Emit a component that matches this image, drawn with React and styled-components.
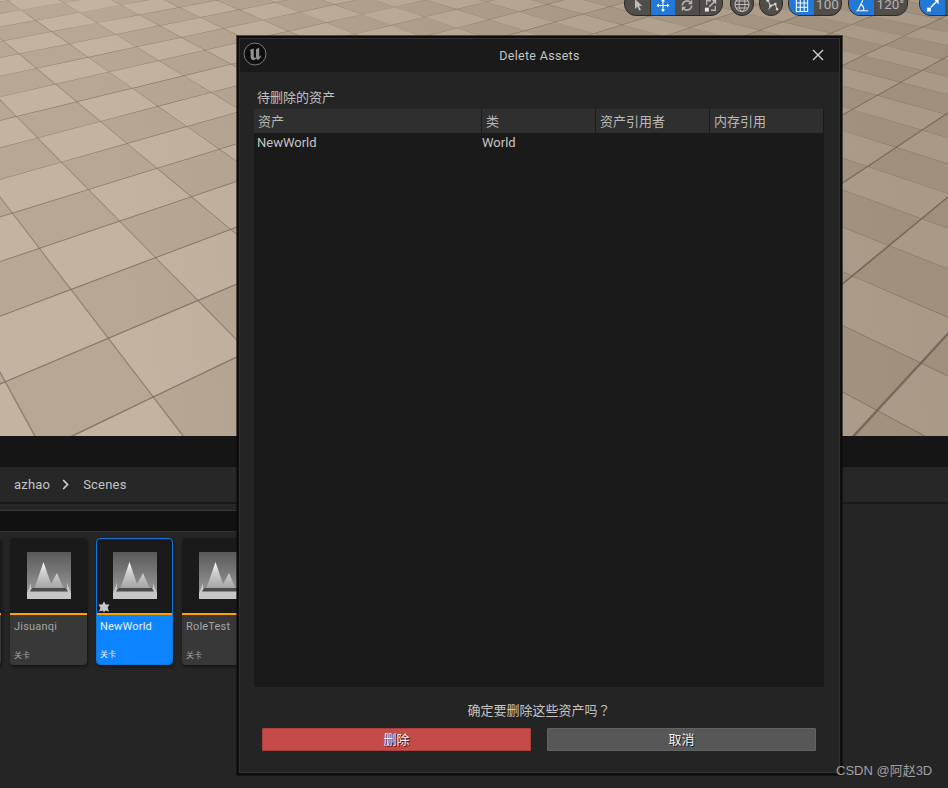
import React from "react";
import styled, { createGlobalStyle } from "styled-components";

const GlobalStyle = createGlobalStyle`
  html, body { margin: 0; padding: 0; background: #252525; }
  body { font-family: Roboto, "Noto Sans CJK SC", sans-serif; }
`;

const Page = styled.div`
  position: relative;
  width: 948px;
  height: 788px;
  overflow: hidden;
  display: flex;
  flex-direction: column;
  background: #252525;
`;

/* ---------- viewport ---------- */
const Viewport = styled.div`
  position: relative;
  height: 436px;
  flex: none;
  overflow: hidden;
  background: #b8a994;
`;
const FloorSvg = styled.svg`
  display: block;
`;
const Toolbar = styled.div`
  position: absolute;
  top: 0;
  left: 624px;
  display: flex;
  align-items: flex-start;
`;
const Pill = styled.div`
  flex: none;
  display: flex;
  width: ${(p) => p.$w}px;
  height: 26px;
  margin-top: -10px;
  margin-left: ${(p) => p.$gap || 0}px;
  box-sizing: border-box;
  border: 1px solid #2c2a28;
  border-radius: 12px;
  overflow: hidden;
  background: #514d49;
`;
const Segment = styled.div`
  flex: ${(p) => (p.$w ? `0 0 ${p.$w}px` : "1")};
  display: flex;
  align-items: flex-end;
  justify-content: center;
  padding-bottom: 3px;
  box-sizing: border-box;
  background: ${(p) => (p.$active ? "#2178d6" : "transparent")};
  border-right: ${(p) => (p.$divide ? "1px solid #35322f" : "none")};
  color: #b5b3b0;
  font-size: 13.5px;
  line-height: 15px;
`;

/* ---------- content browser ---------- */
const Band = styled.div`
  height: 31px;
  flex: none;
  background: #151515;
`;
const PathBar = styled.div`
  height: 35px;
  flex: none;
  display: flex;
  align-items: center;
  padding-left: 14px;
  background: #272727;
  color: #c4c4c4;
  font-size: 13px;
  letter-spacing: 0.2px;
`;
const Chevron = styled.svg`
  margin: 0 14px 0 12px;
`;
const Rule = styled.div`
  height: 2px;
  flex: none;
  background: #1a1a1a;
`;
const FilterGap = styled.div`
  width: 400px;
  height: 7px;
  flex: none;
  box-sizing: border-box;
  background: #262626;
  border-bottom: 1px solid #383838;
`;
const FilterStrip = styled.div`
  width: 400px;
  height: 20px;
  flex: none;
  background: #111111;
  border-bottom: 1px solid #333333;
`;
const AssetRow = styled.div`
  flex: 1;
  display: flex;
  gap: 9px;
  padding-top: 6px;
  margin-left: -76px;
`;
const Card = styled.div`
  position: relative;
  flex: none;
  width: 77px;
  height: 127px;
  box-sizing: border-box;
  display: flex;
  flex-direction: column;
  border-radius: 4px;
  overflow: hidden;
  background: #1a1a1a;
  box-shadow: 1px 2px 3px rgba(0, 0, 0, 0.45);
  border: ${(p) => (p.$selected ? "1px solid #0f78dc" : "none")};
`;
const Thumb = styled.div`
  flex: 1;
  display: flex;
  justify-content: center;
  padding-top: ${(p) => (p.$selected ? 13 : 14)}px;
`;
const TypeBar = styled.div`
  height: 2px;
  flex: none;
  background: #ffa200;
`;
const CardBody = styled.div`
  height: ${(p) => (p.$selected ? 49 : 50)}px;
  flex: none;
  display: flex;
  flex-direction: column;
  justify-content: space-between;
  box-sizing: border-box;
  padding: 5px 4px 3px ${(p) => (p.$selected ? 3 : 4)}px;
  background: ${(p) => (p.$selected ? "#0c84ff" : "#383838")};
  color: ${(p) => (p.$selected ? "#e8f2ff" : "#a4a4a4")};
`;
const CardName = styled.div`
  font-size: 11px;
  line-height: 14px;
  letter-spacing: 0.2px;
`;
const CardType = styled.div`
  font-size: 8px;
  line-height: 12px;
`;
const Star = styled.svg`
  position: absolute;
  left: 1px;
  top: 62px;
`;

/* ---------- dialog ---------- */
const Dialog = styled.div`
  position: absolute;
  left: 237px;
  top: 36px;
  width: 605px;
  height: 739px;
  box-sizing: border-box;
  border: 1px solid #0c0c0c;
  outline: 1px solid rgba(12, 12, 12, 0.6);
  background: #0f0f0f;
  padding: 1px;
`;
const DialogFrame = styled.div`
  height: 100%;
  box-sizing: border-box;
  display: flex;
  flex-direction: column;
  border: 1px solid #303030;
  background: #242424;
`;
const TitleBar = styled.div`
  position: relative;
  height: 33px;
  flex: none;
  display: flex;
  align-items: center;
  justify-content: center;
  background: #1a1a1a;
  color: #c4c4c4;
  font-size: 12.5px;
  letter-spacing: 0.3px;
`;
const Logo = styled.svg`
  position: absolute;
  left: 3px;
  top: 3px;
`;
const CloseIcon = styled.svg`
  position: absolute;
  right: 14px;
  top: 9px;
`;
const DialogBody = styled.div`
  flex: 1;
  display: flex;
  flex-direction: column;
  padding: 0 15px 0 14px;
`;
const SectionLabel = styled.div`
  height: 37px;
  flex: none;
  box-sizing: border-box;
  padding: 17px 0 0 3px;
  color: #c0c0c0;
  font-size: 13px;
  line-height: 18px;
`;
const Table = styled.div`
  flex: 1;
  display: flex;
  flex-direction: column;
  background: #1a1a1a;
  color: #c4c4c4;
  font-size: 13px;
`;
const HeaderRow = styled.div`
  height: 24px;
  flex: none;
  display: grid;
  grid-template-columns: 228px 114px 114px 1fr;
  margin-right: 1px;
  background: #2f2f2f;
`;
const HeaderCell = styled.div`
  display: flex;
  align-items: center;
  padding: 0 0 2px 4px;
  box-sizing: border-box;
  border-right: ${(p) => (p.$last ? "none" : "1px solid #1c1c1c")};
  color: #b8b8b8;
`;
const DataRow = styled.div`
  height: 19px;
  flex: none;
  display: grid;
  grid-template-columns: 228px 1fr;
  align-items: center;
`;
const DataCell = styled.div`
  padding-left: 3px;
  &:nth-child(2) { padding-left: 0; }
`;
const Footer = styled.div`
  height: 85px;
  flex: none;
  display: flex;
  flex-direction: column;
  align-items: center;
  color: #c4c4c4;
  font-size: 13px;
`;
const Question = styled.div`
  height: 41px;
  flex: none;
  box-sizing: border-box;
  padding-top: 14px;
  line-height: 18px;
`;
const QuestionMark = styled.span`
  font-family: "Noto Sans CJK TC", sans-serif;
`;
const ButtonRow = styled.div`
  align-self: stretch;
  display: grid;
  grid-template-columns: 269px 269px;
  gap: 16px;
  padding-left: 8px;
`;
const ActionButton = styled.button`
  height: 23px;
  padding: 0;
  box-sizing: border-box;
  border-radius: 1px;
  border: 1px solid ${(p) => (p.$danger ? "#ab3f3d" : "#636363")};
  background: ${(p) => (p.$danger ? "#c54b49" : "#575757")};
  color: #f2f2f2;
  font-family: inherit;
  font-size: 13px;
  line-height: 20px;
  text-shadow: 1px 1px 0 rgba(0, 0, 0, 0.7);
`;
const Watermark = styled.div`
  position: absolute;
  left: 836px;
  top: 762px;
  color: #a0a0a0;
  font-family: "Liberation Sans", "Noto Sans CJK SC", sans-serif;
  font-size: 13px;
  line-height: 18px;
  white-space: nowrap;
`;

/* ---------- floor drawing: a tile grid under a two-point perspective ---------- */
const ALPHA = 0.0772;
const BETA = 0.1017;
const project = (u, v) => {
  const a = ALPHA * u;
  const b = BETA * v;
  const s = 1 + a + b;
  return [(1476 * a - 334 * b + 153.3) / s, (-239 * (a + b) + 397) / s, s];
};
const quad = (u0, v0, u1, v1) => {
  const pts = [project(u0, v0), project(u1, v0), project(u1, v1), project(u0, v1)];
  if (pts.some((p) => p[2] < 0.15)) return null;
  const xs = pts.map((p) => p[0]);
  const ys = pts.map((p) => p[1]);
  if (Math.max(...xs) < -5 || Math.min(...xs) > 953 || Math.max(...ys) < -5 || Math.min(...ys) > 441) return null;
  return pts.map((p) => `${p[0].toFixed(1)},${p[1].toFixed(1)}`).join(" ");
};
const buildFloor = () => {
  const light = [];
  const dark = [];
  const groutU = [];
  const groutV = [];
  for (let i = -40; i < 70; i++) {
    for (let j = -70; j < 40; j++) {
      const t = quad(i, j, i + 1, j + 1);
      if (!t) continue;
      ((i + j) % 2 === 0 ? light : dark).push(t);
      const e1 = quad(i - 0.006, j, i + 0.006, j + 1);
      const e2 = quad(i, j - 0.009, i + 1, j + 0.009);
      if (e1) groutU.push(e1);
      if (e2) groutV.push(e2);
    }
  }
  return { light, dark, groutU, groutV };
};
const floor = buildFloor();

const Floor = () => (
  <FloorSvg width="948" height="436" viewBox="0 0 948 436">
    <defs>
      <linearGradient id="shade" gradientUnits="userSpaceOnUse" x1="120" y1="300" x2="900" y2="200">
        <stop offset="0" stopColor="#2a1a08" stopOpacity="0" />
        <stop offset="1" stopColor="#2a1a08" stopOpacity="0.17" />
      </linearGradient>
    </defs>
    {floor.light.map((p, i) => <polygon key={`l${i}`} points={p} fill="#c3b4a1" stroke="#c3b4a1" strokeWidth="0.5" />)}
    {floor.dark.map((p, i) => <polygon key={`d${i}`} points={p} fill="#b8a893" stroke="#b8a893" strokeWidth="0.5" />)}
    {floor.groutU.map((p, i) => <polygon key={`u${i}`} points={p} fill="#6f675c" fillOpacity="0.6" />)}
    {floor.groutV.map((p, i) => <polygon key={`v${i}`} points={p} fill="#6f675c" fillOpacity="0.75" />)}
    <rect width="948" height="436" fill="url(#shade)" />
  </FloorSvg>
);

/* ---------- icons ---------- */
const Ico = ({ children, w = 14, h = 13 }) => (
  <svg width={w} height={h} viewBox="0 0 16 15" fill="none" stroke="currentColor">
    {children}
  </svg>
);
const SelectIcon = () => (
  <Ico><path d="M4.5 0 L4.5 11.5 L7.3 8.8 L9.6 13.5 L11.4 12.6 L9.2 8 L13 8 Z" fill="#bdbab7" stroke="none" /></Ico>
);
const MoveIcon = () => (
  <Ico>
    <path d="M8 1.5V13.5M2 7.5H14" stroke="#fff" strokeWidth="1.3" />
    <path d="M8 0 L5.6 2.8H10.4Z M8 15 L5.6 12.2H10.4Z M0.5 7.5 L3.3 5.1V9.9Z M15.5 7.5 L12.7 5.1V9.9Z" fill="#fff" stroke="none" />
  </Ico>
);
const RotateIcon = () => (
  <Ico>
    <path d="M2.6 7.5A5.4 5.4 0 0 1 12 4M13.4 7.5A5.4 5.4 0 0 1 4 11" stroke="#b5b2af" strokeWidth="1.8" />
    <path d="M14 0.5V6H9Z M2 14.5V9H7Z" fill="#b5b2af" stroke="none" />
  </Ico>
);
const ScaleIcon = () => (
  <Ico>
    <path d="M3 7V2H8M13 8V13H8" stroke="#b5b2af" strokeWidth="1.5" />
    <path d="M6 9L13 2" stroke="#c2bfbc" strokeWidth="1.6" />
    <path d="M14 1v5l-5-5z" fill="#c2bfbc" stroke="none" />
    <rect x="1" y="10" width="4.5" height="4.5" fill="#e8e6e4" stroke="none" />
  </Ico>
);
const GlobeIcon = () => (
  <Ico w={16} h={15}>
    <circle cx="8" cy="7.5" r="7" stroke="#bdbab7" strokeWidth="1.1" />
    <ellipse cx="8" cy="7.5" rx="3" ry="7" stroke="#bdbab7" strokeWidth="1" />
    <path d="M1 7.5H15M2 4H14M2 11H14" stroke="#bdbab7" strokeWidth="1" />
  </Ico>
);
const SnapIcon = () => (
  <Ico w={15} h={14}>
    <path d="M4 2L7 8.5L12 6.5L14 12M7 8.5L5 12" stroke="#bdbab7" strokeWidth="1.3" />
    <circle cx="4" cy="2.5" r="1.7" fill="#d8d6d4" stroke="none" />
    <circle cx="7" cy="8.5" r="1.5" fill="#d8d6d4" stroke="none" />
    <circle cx="12" cy="6.5" r="1.5" fill="#d8d6d4" stroke="none" />
    <circle cx="14" cy="12" r="1.3" fill="#d8d6d4" stroke="none" />
  </Ico>
);
const GridIcon = () => (
  <Ico>
    <path d="M1.5 0V14.5H14.5V0M1.5 4.5H14.5M1.5 9.5H14.5M6 0V14.5M10.5 0V14.5" stroke="#fff" strokeWidth="1.2" />
  </Ico>
);
const AngleIcon = () => (
  <Ico>
    <path d="M1.5 13.5H15M3 13.5L9 1.5M7.3 6.3A7 7 0 0 1 9.8 13.5" stroke="#fff" strokeWidth="1.3" />
  </Ico>
);
const SurfaceScaleIcon = () => (
  <Ico>
    <path d="M5.5 9.5L13 2" stroke="#fff" strokeWidth="1.8" />
    <path d="M14.5 0.5v5.5l-5.5-5.5z" fill="#fff" stroke="none" />
    <rect x="1" y="10" width="4.5" height="4.5" fill="#fff" stroke="none" />
  </Ico>
);
const LevelIcon = () => (
  <svg width="44" height="47" viewBox="0 0 44 47">
    <defs>
      <linearGradient id="sky" x1="0" y1="0" x2="0" y2="1">
        <stop offset="0" stopColor="#595959" />
        <stop offset="1" stopColor="#a2a2a2" />
      </linearGradient>
      <linearGradient id="peak" x1="0" y1="0" x2="0" y2="1">
        <stop offset="0" stopColor="#ffffff" />
        <stop offset="0.4" stopColor="#cfcfcf" />
        <stop offset="1" stopColor="#a5a5a5" />
      </linearGradient>
    </defs>
    <rect width="44" height="47" fill="url(#sky)" />
    <path d="M0 47V41L4 31V36H40V31L44 41V47Z" fill="#c6c6c6" />
    <path d="M3 39.5L5 36H39L41 39.5Z" fill="#4b4b4b" />
    <path d="M7.5 36L16.5 10L24 32L30 21L36.5 36Z" fill="url(#peak)" />
  </svg>
);
const AssetCard = ({ name, selected }) => (
  <Card $selected={selected}>
    <Thumb $selected={selected}><LevelIcon /></Thumb>
    <TypeBar />
    <CardBody $selected={selected}>
      {name && <CardName>{name}</CardName>}
      {name && <CardType>关卡</CardType>}
    </CardBody>
    {selected && (
      <Star width="12" height="12" viewBox="0 0 12 12">
        <path d="M6 0.5L7.8 3.6L11.5 3.4L9.6 6.8L11 10.6L7.2 9.6L6 11.5L4.8 9.6L1 10.6L2.4 6.8L0.5 3.4L4.2 3.6Z" fill="#c8c8c8" />
      </Star>
    )}
  </Card>
);

export default function App() {
  return (
    <Page>
      <GlobalStyle />
      <Viewport>
        <Floor />
        <Toolbar>
          <Pill $w={99}>
            <Segment $w={26} $divide><SelectIcon /></Segment>
            <Segment $w={24} $active><MoveIcon /></Segment>
            <Segment $w={25} $divide><RotateIcon /></Segment>
            <Segment><ScaleIcon /></Segment>
          </Pill>
          <Pill $w={24} $gap={7}><Segment><GlobeIcon /></Segment></Pill>
          <Pill $w={24} $gap={5}><Segment><SnapIcon /></Segment></Pill>
          <Pill $w={54} $gap={5}>
            <Segment $w={25} $active><GridIcon /></Segment>
            <Segment>100</Segment>
          </Pill>
          <Pill $w={60} $gap={6}>
            <Segment $w={25} $active><AngleIcon /></Segment>
            <Segment>120°</Segment>
          </Pill>
          <Pill $w={50} $gap={11}>
            <Segment $w={25} $active><SurfaceScaleIcon /></Segment>
            <Segment />
          </Pill>
        </Toolbar>
      </Viewport>
      <Band />
      <PathBar>
        azhao
        <Chevron width="7" height="11" viewBox="0 0 7 11" fill="none">
          <path d="M1.2 1L5.5 5.5L1.2 10" stroke="#cfcfcf" strokeWidth="1.7" />
        </Chevron>
        Scenes
      </PathBar>
      <Rule />
      <FilterGap />
      <FilterStrip />
      <AssetRow>
        <AssetCard name="" />
        <AssetCard name="Jisuanqi" />
        <AssetCard name="NewWorld" selected />
        <AssetCard name="RoleTest" />
      </AssetRow>
      <Dialog>
        <DialogFrame>
          <TitleBar>
            <Logo width="24" height="24" viewBox="0 0 24 24" fill="none">
              <circle cx="12" cy="12" r="11" fill="#141414" stroke="#777" strokeWidth="1" />
              <circle cx="12" cy="12" r="9.2" fill="#0c0c0c" />
              <path d="M6.5 8.5C8 7.2 9.8 6.6 10.8 6.5V14.8C10.8 16 12 16 13 15.2V7.3L16.2 5.6V14.8L17.8 13.3V15.3L15 18.2L13.2 16.6L11.2 18.2C8.8 18.2 7.6 17 7.6 15V9.2Z" fill="#8f8f8f" />
            </Logo>
            Delete Assets
            <CloseIcon width="14" height="14" viewBox="0 0 14 14" fill="none">
              <path d="M2 2L12 12M12 2L2 12" stroke="#cfcfcf" strokeWidth="1.4" />
            </CloseIcon>
          </TitleBar>
          <DialogBody>
            <SectionLabel>待删除的资产</SectionLabel>
            <Table>
              <HeaderRow>
                <HeaderCell>资产</HeaderCell>
                <HeaderCell>类</HeaderCell>
                <HeaderCell>资产引用者</HeaderCell>
                <HeaderCell $last>内存引用</HeaderCell>
              </HeaderRow>
              <DataRow>
                <DataCell>NewWorld</DataCell>
                <DataCell>World</DataCell>
              </DataRow>
            </Table>
            <Footer>
              <Question>确定要删除这些资产吗<QuestionMark>？</QuestionMark></Question>
              <ButtonRow>
                <ActionButton $danger>删除</ActionButton>
                <ActionButton>取消</ActionButton>
              </ButtonRow>
            </Footer>
          </DialogBody>
        </DialogFrame>
      </Dialog>
      <Watermark>CSDN @阿赵3D</Watermark>
    </Page>
  );
}
